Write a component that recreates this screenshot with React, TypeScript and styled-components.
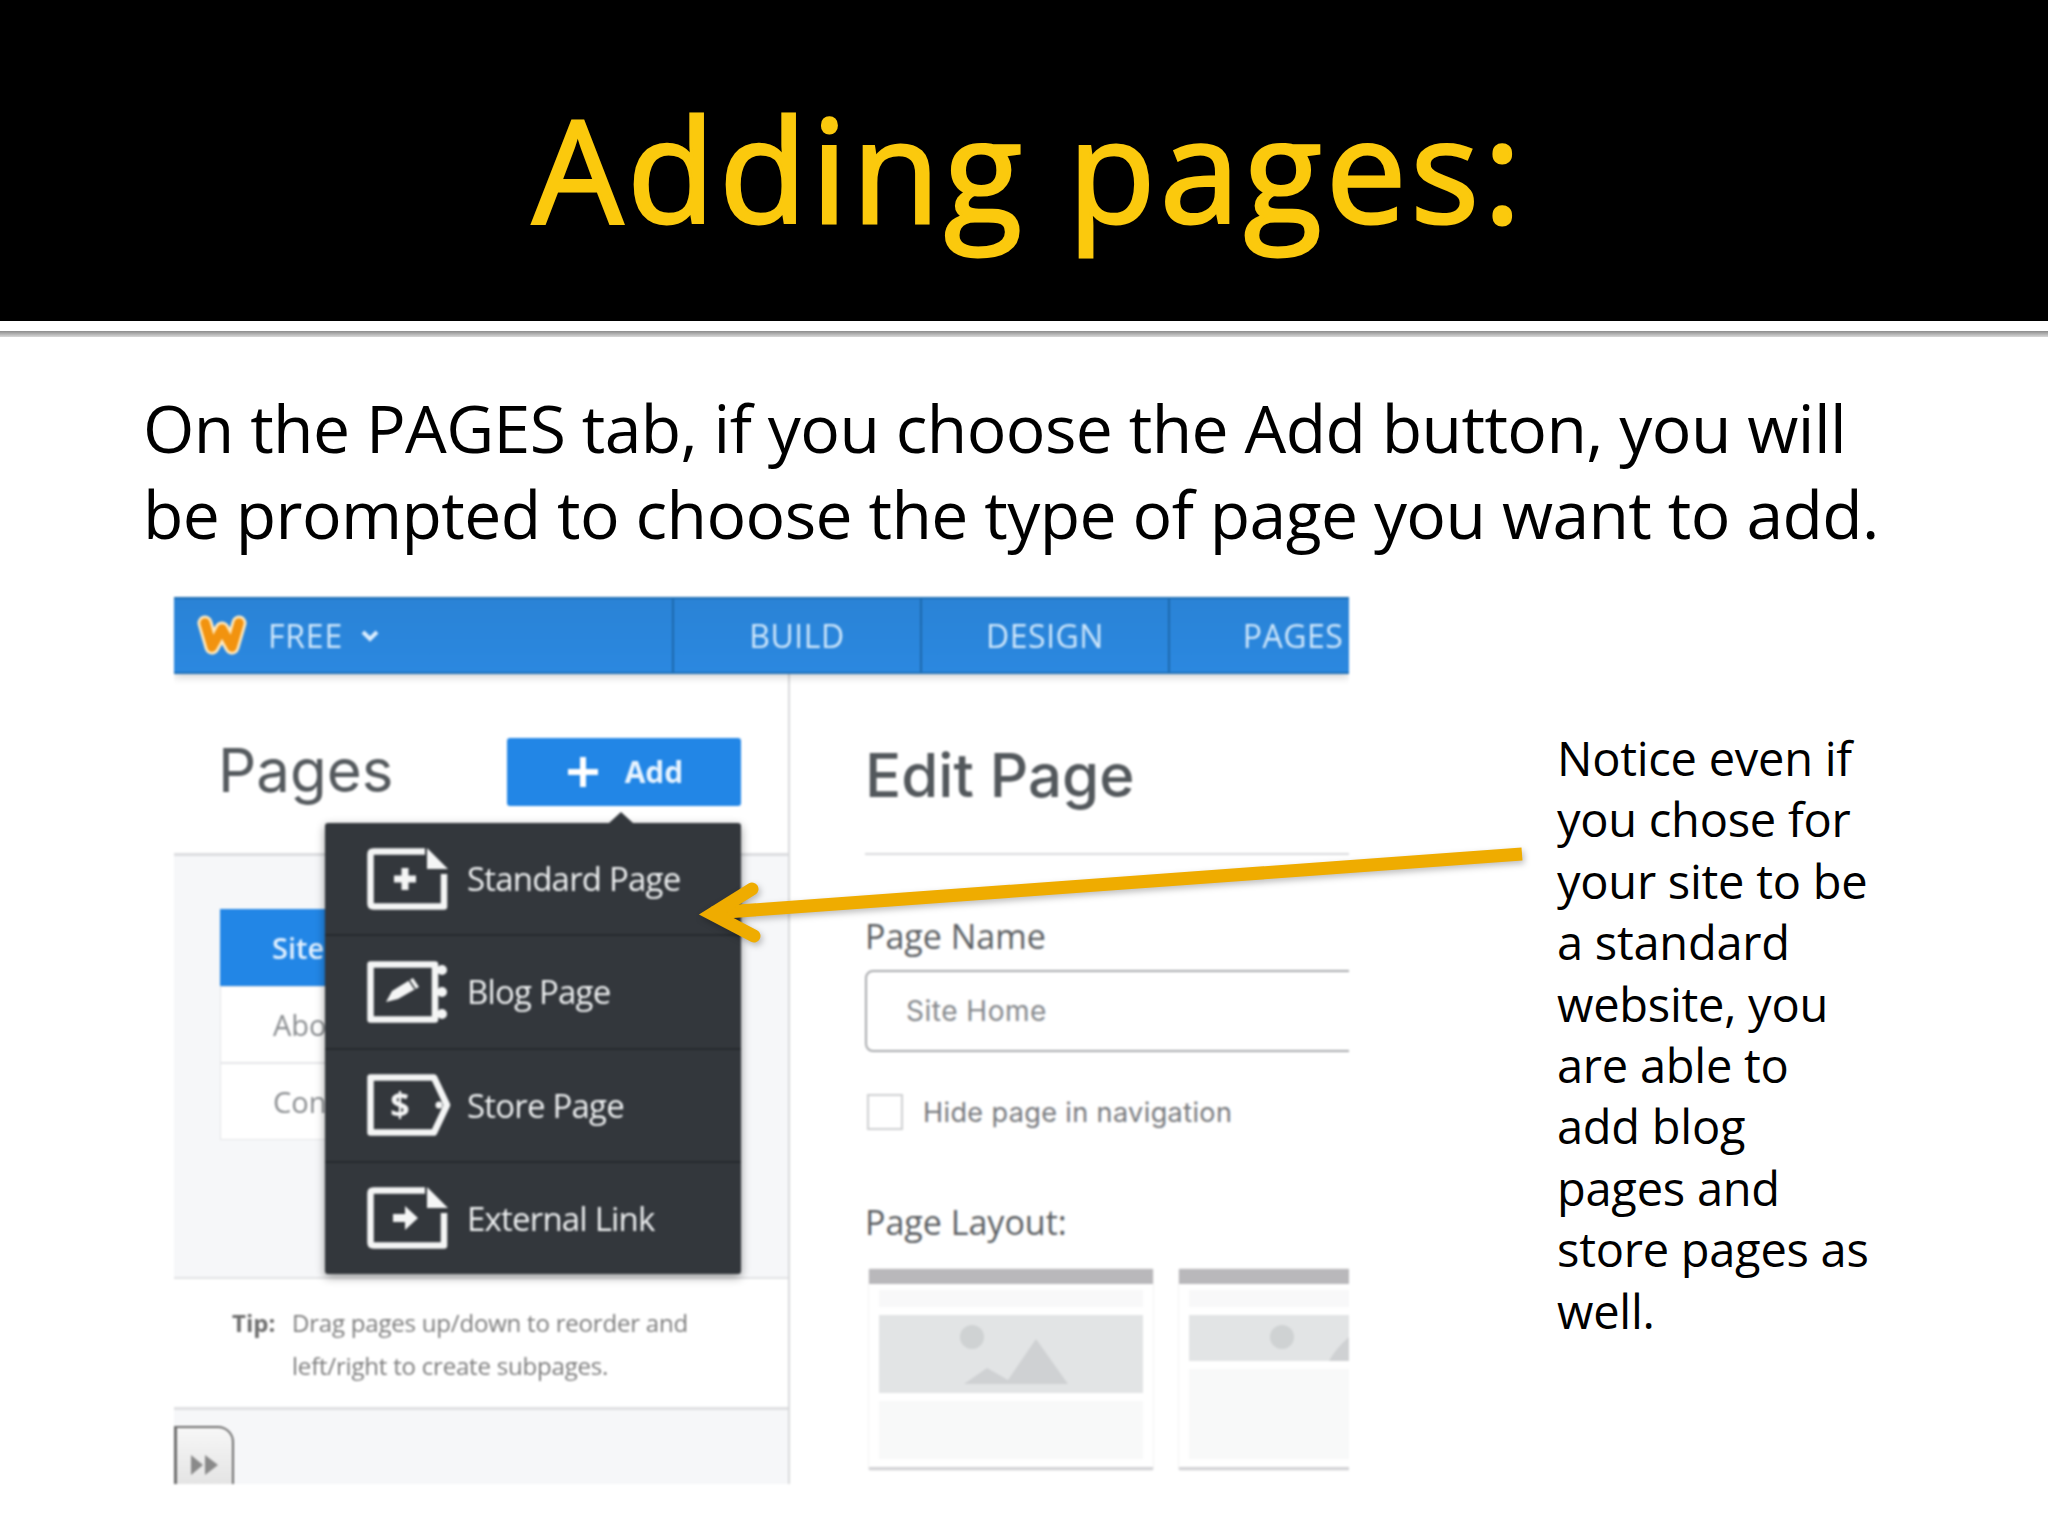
import React from 'react';
import styled, { createGlobalStyle } from 'styled-components';

const GlobalStyle = createGlobalStyle`
  html, body { margin: 0; padding: 0; background: #fff; }
  * { box-sizing: border-box; }
`;

const SLIDE_FONT = `"Open Sans", "Noto Sans", sans-serif`;
const UI_FONT = `"Open Sans", "Noto Sans", sans-serif`;
const HEAD_FONT = `Inter, Lato, "Open Sans", sans-serif`;

const menuItems = [
  { id: 'standard', label: 'Standard Page' },
  { id: 'blog', label: 'Blog Page' },
  { id: 'store', label: 'Store Page' },
  { id: 'external', label: 'External Link' },
];

const navTabs = ['BUILD', 'DESIGN', 'PAGES'];

function PageGlyph({ kind }: { kind: string }) {
  return (
    <svg width="84" height="62" viewBox="0 0 84 62" fill="none">
      {kind === 'blog' && (
        <>
          <path d="M3.500 3.500H68V58.500H3.500Z" stroke="#f4f5f5" strokeWidth="6.500" strokeLinejoin="round" />
          <circle cx="75" cy="9" r="5" fill="#f4f5f5" />
          <circle cx="75" cy="31" r="5" fill="#f4f5f5" />
          <circle cx="75" cy="53" r="5" fill="#f4f5f5" />
          <path d="M19 41l6-11 21-13 6 9-21 12z" fill="#f4f5f5" />
          <path d="M42 19l6 9" stroke="#33373c" strokeWidth="1.500" />
        </>
      )}
      {kind === 'store' && (
        <>
          <path d="M3.500 3.500H67L80 31 67 58.500H3.500Z" stroke="#f4f5f5" strokeWidth="6.500" strokeLinejoin="round" />
          <circle cx="72" cy="31" r="3.500" fill="#f4f5f5" />
          <text x="33" y="43" textAnchor="middle" fontFamily={UI_FONT} fontWeight="700" fontSize="34" fill="#f4f5f5">
            $
          </text>
        </>
      )}
      {(kind === 'standard' || kind === 'external') && (
        <>
          <path d="M58 3.500H6.500q-3 0-3 3V55.500q0 3 3 3H77V26" stroke="#f4f5f5" strokeWidth="6.500" strokeLinejoin="round" />
          <path d="M60 0L81 21H60Z" fill="#f4f5f5" />
          {kind === 'standard' && <path d="M38 20v22M27 31h22" stroke="#f4f5f5" strokeWidth="7" />}
          {kind === 'external' && <path d="M26 27h12v-8l13 12-13 12v-8H26z" fill="#f4f5f5" />}
        </>
      )}
    </svg>
  );
}

function LayoutThumb({ short }: { short?: boolean }) {
  return (
    <svg width="264" height={short ? 46 : 78} viewBox={short ? '0 0 264 46' : '0 0 264 78'}>
      <circle cx="93" cy="22" r="12" fill="#cfd2d3" />
      {short ? (
        <path d="M140 46q8-16 30-32l30 32z" fill="#cfd1d3" />
      ) : (
        <path d="M85 69l23-16 21 12 28-41 32 45z" fill="#cfd1d3" />
      )}
    </svg>
  );
}

export default function App() {
  return (
    <Slide>
      <GlobalStyle />
      <TitleBar>
        <Title>Adding pages:</Title>
      </TitleBar>
      <TitleRule />
      <Intro>
        On the PAGES tab, if you choose the Add button, you will
        <br />
        be prompted to choose the type of page you want to add.
      </Intro>
      <ContentRow>
        <Shot>
          <NavBar>
            <Brand>
              <svg width="52" height="44" viewBox="0 0 52 44" fill="none">
                <path d="M9 9l7 24 10-18 10 18 7-24" stroke="#ffe9bd" strokeWidth="15" strokeLinecap="round" strokeLinejoin="round" />
                <path d="M9 9l7 24 10-18 10 18 7-24" stroke="#f2930f" strokeWidth="9.500" strokeLinecap="round" strokeLinejoin="round" />
              </svg>
              <PlanLabel>FREE</PlanLabel>
              <svg width="22" height="14" viewBox="0 0 22 14" fill="none">
                <path d="M4 3l7 7 7-7" stroke="#dbeeff" strokeWidth="4" />
              </svg>
            </Brand>
            {navTabs.map(tab => (
              <NavTab key={tab}>{tab}</NavTab>
            ))}
          </NavBar>
          <Workspace>
            <Sidebar>
              <SidebarHead>
                <PanelTitle>Pages</PanelTitle>
                <AddButton>
                  <svg width="36" height="36" viewBox="0 0 36 36">
                    <path d="M18 3v30M3 18h30" stroke="#fff" strokeWidth="6" />
                  </svg>
                  Add
                </AddButton>
              </SidebarHead>
              <PageListArea>
                <PageList>
                  <PageRow $active>Site Home</PageRow>
                  <PageRow>About</PageRow>
                  <PageRow>Contact</PageRow>
                </PageList>
              </PageListArea>
              <TipBox>
                <TipLabel>Tip:</TipLabel>
                <TipText>
                  Drag pages up/down to reorder and
                  <br />
                  left/right to create subpages.
                </TipText>
              </TipBox>
              <SidebarFoot>
                <CollapseTab>
                  <svg width="30" height="24" viewBox="0 0 30 24">
                    <path d="M1 2l12 10L1 22zM15 2l13 10-13 10z" fill="#8a8a8a" />
                  </svg>
                </CollapseTab>
              </SidebarFoot>
              <AddMenu>
                {menuItems.map(item => (
                  <MenuRow key={item.id}>
                    <PageGlyph kind={item.id} />
                    <MenuLabel>{item.label}</MenuLabel>
                  </MenuRow>
                ))}
              </AddMenu>
            </Sidebar>
            <EditPane>
              <EditTitle>Edit Page</EditTitle>
              <FieldLabel>Page Name</FieldLabel>
              <NameInput>Site Home</NameInput>
              <CheckRow>
                <CheckBox />
                <CheckLabel>Hide page in navigation</CheckLabel>
              </CheckRow>
              <LayoutLabel>Page Layout:</LayoutLabel>
              <LayoutRow>
                <LayoutCard>
                  <CardBar />
                  <CardStrip />
                  <CardImage>
                    <LayoutThumb />
                  </CardImage>
                  <CardBody />
                </LayoutCard>
                <LayoutCard>
                  <CardBar />
                  <CardStrip />
                  <CardImage $short>
                    <LayoutThumb short />
                  </CardImage>
                  <CardBody />
                </LayoutCard>
              </LayoutRow>
            </EditPane>
          </Workspace>
        </Shot>
        <SideNote>
          Notice even if
          <br />
          you chose for
          <br />
          your site to be
          <br />a standard
          <br />
          website, you
          <br />
          are able to
          <br />
          add blog
          <br />
          pages and
          <br />
          store pages as
          <br />
          well.
        </SideNote>
      </ContentRow>
      <ArrowLayer width="2048" height="1536" viewBox="0 0 2048 1536" fill="none">
        <path d="M1522 854L712 913" stroke="#efac00" strokeWidth="13" />
        <path d="M752 889L712 914l42 22" stroke="#efac00" strokeWidth="13" strokeLinecap="round" strokeLinejoin="miter" />
      </ArrowLayer>
    </Slide>
  );
}

const Slide = styled.div`
  position: relative;
  width: 2048px;
  height: 1536px;
  overflow: hidden;
  background: #fff;
`;

const TitleBar = styled.div`
  display: flex;
  justify-content: center;
  height: 321px;
  padding: 73px 0 0 10px;
  background: #000;
`;

const Title = styled.h1`
  margin: 0;
  font-family: ${SLIDE_FONT};
  font-size: 143px;
  font-weight: 400;
  line-height: 190px;
  letter-spacing: 4.500px;
  -webkit-text-stroke: 3px #fbc90d;
  color: #fbc90d;
`;

const TitleRule = styled.div`
  height: 6px;
  margin-top: 10px;
  background: linear-gradient(#8c8c8c, #d8d8d8);
`;

const Intro = styled.p`
  margin: 47px 0 0 143px;
  font-family: ${SLIDE_FONT};
  font-size: 66px;
  line-height: 86px;
  letter-spacing: -0.600px;
  white-space: nowrap;
  color: #000;
`;

const ContentRow = styled.div`
  display: flex;
  margin: 41px 0 0 174px;
`;

const Shot = styled.div`
  position: relative;
  flex: none;
  width: 1175px;
  height: 887px;
  overflow: hidden;
  filter: blur(0.8px);
`;

const NavBar = styled.div`
  display: flex;
  height: 77px;
  background: linear-gradient(#2a83d6, #2b88e0);
  border-top: 2px solid #1a6cb4;
  border-bottom: 2px solid #1d6fb8;
  box-shadow: 0 3px 8px rgba(0, 0, 0, 0.18);
  position: relative;
  z-index: 1;
  font-family: ${UI_FONT};
`;

const Brand = styled.div`
  flex: none;
  display: flex;
  align-items: center;
  width: 498px;
  padding-left: 22px;
  gap: 20px;
`;

const PlanLabel = styled.span`
  font-size: 32px;
  letter-spacing: 0.800px;
  color: #cfe7fb;
  margin-right: -4px;
`;

const NavTab = styled.div`
  flex: none;
  width: 248px;
  display: flex;
  align-items: center;
  justify-content: center;
  border-left: 2px solid #1d69ad;
  font-size: 32px;
  letter-spacing: 0.500px;
  color: #cfe7fb;
`;

const Workspace = styled.div`
  display: flex;
  height: 810px;
`;

const Sidebar = styled.div`
  position: relative;
  flex: none;
  display: flex;
  flex-direction: column;
  width: 616px;
  border-right: 2px solid #d9dadc;
`;

const SidebarHead = styled.div`
  flex: none;
  display: flex;
  align-items: center;
  justify-content: space-between;
  height: 182px;
  padding: 16px 47px 0 44px;
  border-bottom: 3px solid #dcdde0;
  background: #fff;
`;

const PanelTitle = styled.h2`
  margin: 0 0 4px;
  font-family: ${HEAD_FONT};
  font-size: 60px;
  font-weight: 400;
  color: #555a5e;
`;

const AddButton = styled.div`
  display: flex;
  align-items: center;
  justify-content: center;
  gap: 24px;
  width: 234px;
  height: 68px;
  border-radius: 3px;
  background: #2286e6;
  font-family: ${UI_FONT};
  font-size: 30px;
  font-weight: 700;
  color: #e8f4ff;
`;

const PageListArea = styled.div`
  flex: none;
  height: 423px;
  padding: 53px 46px 0;
  background: #f6f7f9;
  border-bottom: 2px solid #e2e3e5;
`;

const PageList = styled.div`
  width: 521px;
  background: #fff;
`;

const PageRow = styled.div<{ $active?: boolean }>`
  display: flex;
  align-items: center;
  height: 77px;
  padding-left: 52px;
  font-family: ${UI_FONT};
  font-size: 29px;
  font-weight: ${p => (p.$active ? 600 : 400)};
  color: ${p => (p.$active ? '#e3f1ff' : '#8a8d90')};
  background: ${p => (p.$active ? '#2286e6' : '#fff')};
  border: ${p => (p.$active ? 'none' : '1px solid #e5e6e8')};
`;

const TipBox = styled.div`
  flex: none;
  display: flex;
  height: 131px;
  padding: 22px 0 0 58px;
  border-bottom: 3px solid #dfe0e2;
  background: #fff;
  font-family: ${UI_FONT};
  font-size: 24px;
  line-height: 43px;
`;

const TipLabel = styled.span`
  width: 60px;
  font-weight: 700;
  color: #6d6d6d;
`;

const TipText = styled.span`
  color: #7d7d7d;
  letter-spacing: -0.200px;
`;

const SidebarFoot = styled.div`
  flex: none;
  height: 74px;
  padding-top: 16px;
  background: #f6f7f9;
`;

const CollapseTab = styled.div`
  display: flex;
  align-items: center;
  justify-content: center;
  width: 60px;
  height: 78px;
  border: 2px solid #6e6e6e;
  border-left-width: 3px;
  border-radius: 0 16px 0 0;
  background: linear-gradient(#f7f7f7, #dedede);
`;

const AddMenu = styled.div`
  position: absolute;
  top: 149px;
  left: 151px;
  width: 416px;
  height: 451px;
  display: flex;
  flex-direction: column;
  border-radius: 3px;
  background: #33373c;
  box-shadow: 0 3px 10px rgba(0, 0, 0, 0.4);

  &::before {
    content: '';
    position: absolute;
    top: -11px;
    left: 284px;
    border-left: 12px solid transparent;
    border-right: 12px solid transparent;
    border-bottom: 11px solid #33373c;
  }
`;

const MenuRow = styled.div`
  flex: 1;
  display: flex;
  align-items: center;
  gap: 16px;
  padding-left: 42px;
  border-bottom: 2px solid #262a2e;

  &:last-child {
    border-bottom: none;
  }
`;

const MenuLabel = styled.span`
  font-family: ${UI_FONT};
  font-size: 33px;
  letter-spacing: -0.800px;
  color: #eef0f1;
`;

const EditPane = styled.div`
  flex: 1;
  min-width: 0;
  padding: 66px 0 0 75px;
  background: #fff;
`;

const EditTitle = styled.h2`
  margin: 0;
  height: 115px;
  border-bottom: 2px solid #d9dadc;
  font-family: ${HEAD_FONT};
  font-size: 60px;
  font-weight: 500;
  line-height: 70px;
  color: #53585c;
`;

const FieldLabel = styled.div`
  margin-top: 59px;
  font-family: ${UI_FONT};
  font-size: 34px;
  line-height: 44px;
  color: #5c5f63;
`;

const NameInput = styled.div`
  display: flex;
  align-items: center;
  width: 520px;
  height: 82px;
  margin-top: 12px;
  padding-left: 39px;
  border: 2px solid #a9abae;
  border-radius: 8px;
  font-family: ${HEAD_FONT};
  font-size: 28px;
  letter-spacing: 0.500px;
  color: #85888c;
`;

const CheckRow = styled.div`
  display: flex;
  align-items: center;
  gap: 20px;
  margin: 42px 0 0 2px;
`;

const CheckBox = styled.div`
  width: 36px;
  height: 36px;
  border: 2px solid #cfd0d2;
`;

const CheckLabel = styled.span`
  font-family: ${HEAD_FONT};
  font-size: 27px;
  letter-spacing: 0.400px;
  color: #77797d;
`;

const LayoutLabel = styled.div`
  margin-top: 70px;
  font-family: ${UI_FONT};
  font-size: 34px;
  line-height: 44px;
  color: #5c5f63;
`;

const LayoutRow = styled.div`
  display: flex;
  gap: 26px;
  width: 620px;
  margin: 25px 0 0 4px;
`;

const LayoutCard = styled.div`
  flex: none;
  width: 284px;
  height: 201px;
  display: flex;
  flex-direction: column;
  background: #fff;
  border-bottom: 3px solid #d3d3d6;
  box-shadow: 0 0 2px rgba(0, 0, 0, 0.12);
`;

const CardBar = styled.div`
  flex: none;
  height: 15px;
  background: #b9b8bb;
`;

const CardStrip = styled.div`
  flex: none;
  height: 17px;
  margin: 6px 10px 8px;
  background: #f8f8f9;
`;

const CardImage = styled.div<{ $short?: boolean }>`
  flex: none;
  height: ${p => (p.$short ? 46 : 78)}px;
  margin: 0 10px 8px;
  overflow: hidden;
  background: #e2e4e5;
`;

const CardBody = styled.div`
  flex: 1;
  margin: 0 10px 8px;
  background: #f8f9f9;
`;

const SideNote = styled.p`
  margin: 131px 0 0 208px;
  font-family: ${SLIDE_FONT};
  font-size: 47px;
  line-height: 61.400px;
  letter-spacing: -0.250px;
  white-space: nowrap;
  color: #000;
`;

const ArrowLayer = styled.svg`
  position: absolute;
  top: 0;
  left: 0;
  pointer-events: none;
  filter: drop-shadow(2px 3px 3px rgba(0, 0, 0, 0.25));
`;
